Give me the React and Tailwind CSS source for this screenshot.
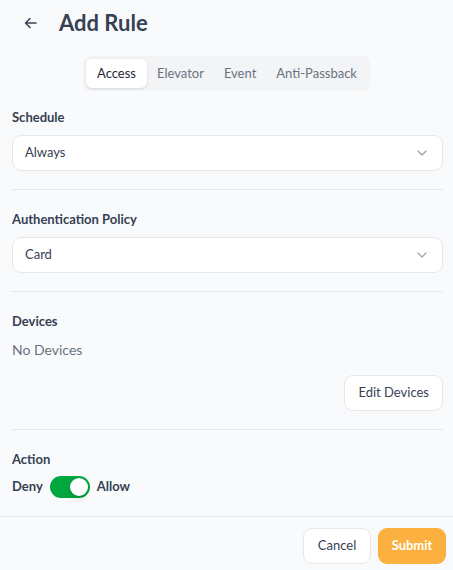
import React, { useState } from 'react';

const TABS = ['Access', 'Elevator', 'Event', 'Anti-Passback'];

// Chevron for select boxes
const Chevron = () => (
  <svg width="10" height="6" viewBox="0 0 10 6" fill="none" className="text-gray-400">
    <path d="M1 1l4 4 4-4" stroke="currentColor" strokeWidth="1.2" strokeLinecap="round" strokeLinejoin="round" />
  </svg>
);

const SelectBox = ({ value }) => (
  <div className="flex items-center justify-between h-9 px-3 bg-white border border-gray-200 rounded-[9px] text-[13px] text-gray-700">
    <span>{value}</span>
    <span className="mr-[3px]"><Chevron /></span>
  </div>
);

const Label = ({ children }) => (
  <div className="text-[13px] leading-[18px] font-bold text-gray-700">{children}</div>
);

const App = () => {
  const [tab, setTab] = useState('Access');
  const [allow, setAllow] = useState(true);

  return (
    <div
      className="w-[453px] h-[570px] bg-gray-50 flex flex-col text-gray-700"
      style={{ fontFamily: 'Lato, "Noto Sans", sans-serif' }}
    >
      {/* Header */}
      <div className="flex items-center h-[46px] pl-[24px]">
        <svg width="13" height="12" viewBox="0 0 13 12" fill="none" className="text-gray-700">
          <path d="M12 6H1.5M6 1.5L1.5 6 6 10.5" stroke="currentColor" strokeWidth="1.5" strokeLinecap="round" strokeLinejoin="round" />
        </svg>
        <h1 className="ml-[22px] text-[22px] font-bold text-[#374151] leading-none">Add Rule</h1>
      </div>

      {/* Tabs */}
      <div className="flex justify-center mt-[10px]">
        <div className="flex p-[3px] bg-gray-100 rounded-lg">
          {TABS.map((t) => (
            <button
              key={t}
              onClick={() => setTab(t)}
              className={
                t === tab
                  ? 'h-[29px] px-[11px] rounded-md bg-white text-[13px] text-gray-800 shadow-sm'
                  : 'h-[29px] px-[10px] rounded-md text-[13px] text-gray-500'
              }
            >
              {t}
            </button>
          ))}
        </div>
      </div>

      <div className="flex-1 pl-3 pr-[10px]">
        {/* Schedule */}
        <div className="pt-[17px] pb-[18px] border-b border-gray-200">
          <Label>Schedule</Label>
          <div className="mt-[9px]">
            <SelectBox value="Always" />
          </div>
        </div>

        {/* Authentication Policy */}
        <div className="pt-[20px] pb-[18px] border-b border-gray-200">
          <Label>Authentication Policy</Label>
          <div className="mt-[9px]">
            <SelectBox value="Card" />
          </div>
        </div>

        {/* Devices */}
        <div className="pt-[20px] pb-[18px] border-b border-gray-200">
          <Label>Devices</Label>
          <div className="mt-[10px] text-[14px] leading-[20px] text-gray-500">No Devices</div>
          <div className="flex justify-end mt-[15px]">
            <button className="h-9 px-[13px] bg-white border border-gray-200 rounded-[9px] text-[13px] text-gray-700">
              Edit Devices
            </button>
          </div>
        </div>

        {/* Action */}
        <div className="pt-[20px]">
          <Label>Action</Label>
          <div className="flex items-center gap-[7px] mt-[8px] text-[13px] font-bold text-gray-700">
            <span>Deny</span>
            <button
              onClick={() => setAllow(!allow)}
              className={
                allow
                  ? 'w-[40px] h-[22px] rounded-full bg-green-600 flex items-center justify-end px-[2px]'
                  : 'w-[40px] h-[22px] rounded-full bg-gray-300 flex items-center justify-start px-[2px]'
              }
            >
              <span className="w-[18px] h-[18px] rounded-full bg-white shadow-md" />
            </button>
            <span>Allow</span>
          </div>
        </div>
      </div>

      {/* Footer */}
      <div className="border-t border-gray-200 flex justify-end gap-[7px] pt-[11px] pb-[6px] pr-[7px]">
        <button className="h-9 w-[68px] bg-white border border-gray-200 rounded-[9px] text-[13px] text-gray-700">
          Cancel
        </button>
        <button className="h-9 w-[68px] bg-[#fbb040] rounded-[9px] text-[13px] font-bold text-white">
          Submit
        </button>
      </div>
    </div>
  );
};

export default App;
